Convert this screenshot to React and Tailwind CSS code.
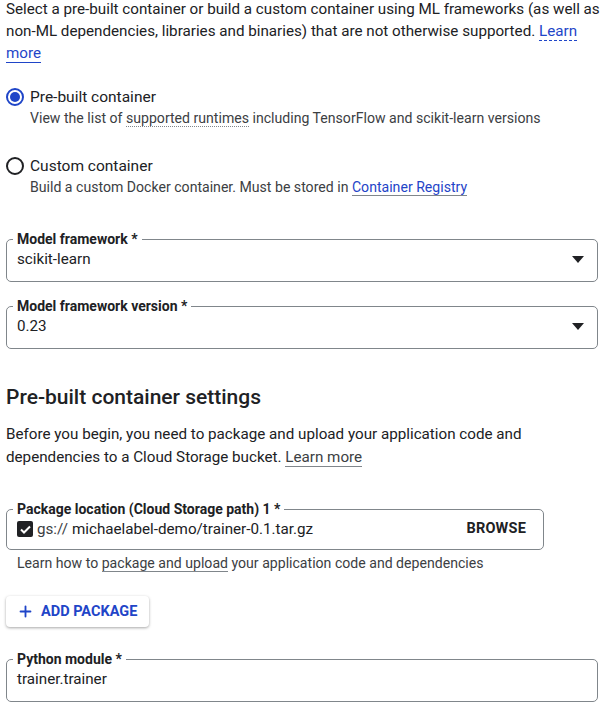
import { Plus } from "lucide-react";

const Radio = ({ checked }) => (
  <span
    className={
      "mt-[2px] flex h-[18px] w-[18px] shrink-0 items-center justify-center rounded-full border-2 " +
      (checked ? "border-[#1f45c8]" : "border-[#202124]")
    }
  >
    {checked && <span className="h-[10px] w-[10px] rounded-full bg-[#1f45c8]" />}
  </span>
);

const Dropdown = () => (
  <svg width="12" height="7" viewBox="0 0 12 7" className="shrink-0">
    <path d="M0 0h12L6 7z" fill="#202124" />
  </svg>
);

const Field = ({ label, width = "w-[592px]", height = "h-[34px]", children }) => (
  <fieldset className={"rounded-[5px] border border-[#80868b] pl-[10px] pr-[13px] " + width}>
    <legend className="ml-[-4px] px-[4px] text-[14px] font-bold leading-[16px] text-[#202124]">
      {label}
    </legend>
    <div className={"flex items-start " + height}>{children}</div>
  </fieldset>
);

const App = () => {
  return (
    <div
      className="h-[702px] w-[600px] overflow-hidden bg-white px-[6px] text-[#202124]"
      style={{ fontFamily: "Roboto, 'Liberation Sans', sans-serif" }}
    >
      <p className="mt-[-2px] whitespace-nowrap text-[15.2px] leading-[22px]">
        Select a pre-built container or build a custom container using ML frameworks (as well as
        <br />
        non-ML dependencies, libraries and binaries) that are not otherwise supported.{" "}
        <span className="border-b border-dashed border-[#1f45c8] text-[#1f45c8]">Learn</span>
        <br />
        <span className="border-b border-[#1f45c8] text-[#1f45c8]">more</span>
      </p>

      <div className="mt-[22px] flex gap-[6px]">
        <Radio checked />
        <div>
          <div className="text-[15.5px] leading-[22px]">Pre-built container</div>
          <div className="text-[14.1px] leading-[20px] text-[#3c4043]">
            View the list of{" "}
            <span className="border-b border-dotted border-[#80868b]">supported runtimes</span>{" "}
            including TensorFlow and scikit-learn versions
          </div>
        </div>
      </div>

      <div className="mt-[27px] flex gap-[6px]">
        <Radio />
        <div>
          <div className="text-[15.5px] leading-[22px]">Custom container</div>
          <div className="text-[14.1px] leading-[20px] text-[#3c4043]">
            Build a custom Docker container. Must be stored in{" "}
            <span className="border-b border-[#80868b] text-[#1f45c8]">Container Registry</span>
          </div>
        </div>
      </div>

      <div className="mt-[34px] flex flex-col gap-[16px]">
        <Field label="Model framework *">
          <div className="flex w-full items-center justify-between text-[15.2px] leading-[24px]">
            <span>scikit-learn</span>
            <Dropdown />
          </div>
        </Field>
        <Field label="Model framework version *">
          <div className="flex w-full items-center justify-between text-[15.2px] leading-[24px]">
            <span>0.23</span>
            <Dropdown />
          </div>
        </Field>
      </div>

      <h2 className="mt-[34px] text-[21px] font-medium leading-[28px]">Pre-built container settings</h2>

      <p className="mt-[12px] whitespace-nowrap text-[15.2px] leading-[23px]">
        Before you begin, you need to package and upload your application code and
        <br />
        dependencies to a Cloud Storage bucket.{" "}
        <span className="border-b border-[#80868b] text-[#3c4043]">Learn more</span>
      </p>

      <div className="mt-[32px]">
        <Field
          label="Package location (Cloud Storage path) 1 *"
          width="w-[538px]"
          height="h-[32px]"
        >
          <div className="flex w-full items-center text-[15.2px] leading-[24px]">
            <span className="flex h-[16px] w-[16px] items-center justify-center rounded-[2px] bg-[#202124]">
              <svg width="11" height="9" viewBox="0 0 11 9">
                <path d="M1 4.5l3 3L10 1.5" fill="none" stroke="white" strokeWidth="2" />
              </svg>
            </span>
            <span className="ml-[4px] text-[#3c4043]">gs://</span>
            <span className="ml-[4px]">michaelabel-demo/trainer-0.1.tar.gz</span>
            <span className="ml-auto pr-[4px] text-[14.5px] font-bold tracking-[0.2px]">BROWSE</span>
          </div>
        </Field>
        <div className="ml-[11px] mt-[3px] text-[14.1px] leading-[20px] text-[#3c4043]">
          Learn how to{" "}
          <span className="border-b border-[#80868b]">package and upload</span> your application
          code and dependencies
        </div>
      </div>

      <button className="mt-[23px] flex h-[31px] w-[143px] items-center gap-[7px] rounded-[4px] bg-white pl-[11px] text-[14.5px] font-bold text-[#1f45c8] shadow-[0_1px_3px_rgba(0,0,0,0.35)]">
        <Plus size={17} strokeWidth={2.6} />
        ADD PACKAGE
      </button>

      <div className="mt-[24px]">
        <Field label="Python module *">
          <div className="text-[15.2px] leading-[24px]">trainer.trainer</div>
        </Field>
      </div>
    </div>
  );
};

export default App;
